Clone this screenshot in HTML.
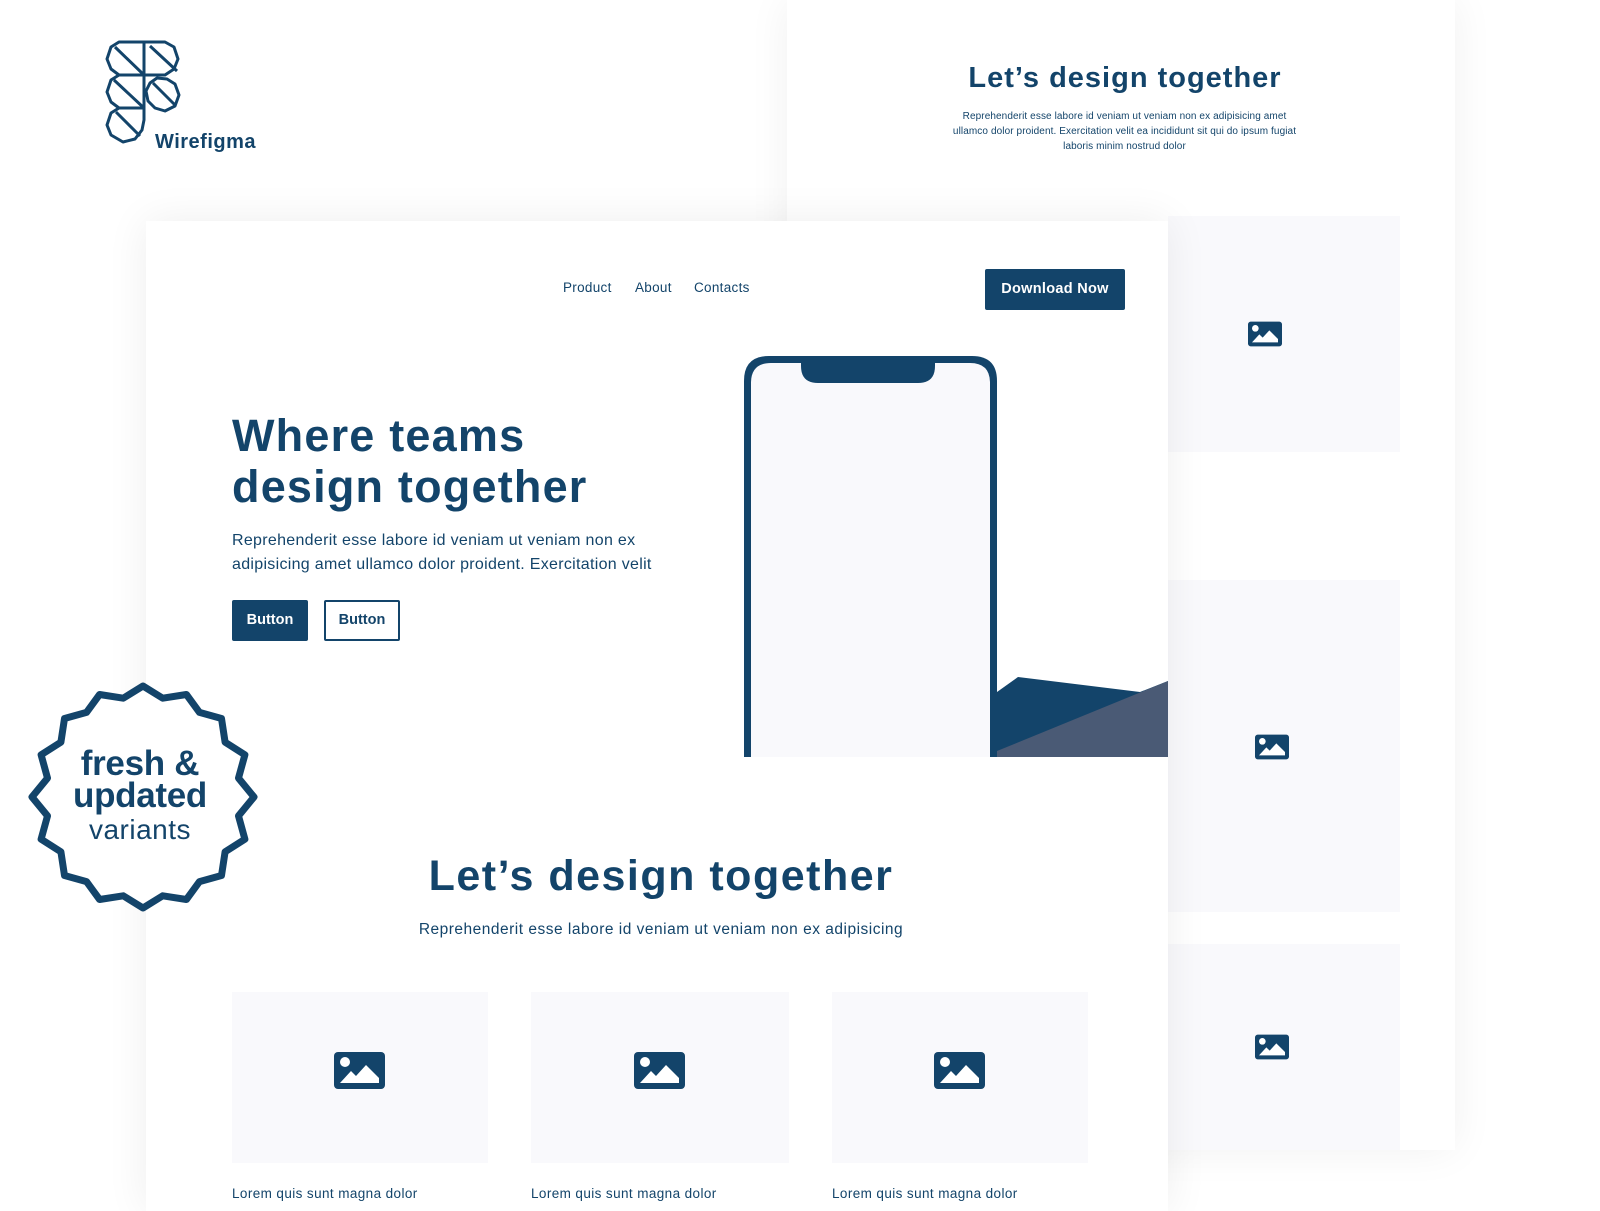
<!DOCTYPE html>
<html><head><meta charset="utf-8"><style>
*{margin:0;padding:0;box-sizing:border-box}
body{width:1600px;height:1200px;overflow:hidden;background:#fff;position:relative;font-family:"Liberation Sans",sans-serif;color:#13446a}
.abs{position:absolute}
.back{left:787px;top:0;width:668px;height:1150px;background:#fff;box-shadow:0 0 40px rgba(0,0,0,.06)}
.main{left:146px;top:221px;width:1022px;height:990px;background:#fff;box-shadow:0 0 40px rgba(0,0,0,.07)}
.ph{background:#f9f9fc}
.b{font-weight:bold}
.c{text-align:center}
</style></head><body>
<div class="abs back">
  <div class="abs c b" style="left:0;width:676px;top:62px;font-size:29px;letter-spacing:1px">Let’s design together</div>
  <div class="abs c" style="left:165px;width:345px;top:109px;font-size:10px;line-height:15px;letter-spacing:.1px">Reprehenderit esse labore id veniam ut veniam non ex adipisicing amet ullamco dolor proident. Exercitation velit ea incididunt sit qui do ipsum fugiat laboris minim nostrud dolor</div>
</div>
<div class="abs ph" style="left:1168px;top:216px;width:232px;height:236px"></div>
<div class="abs ph" style="left:1168px;top:580px;width:232px;height:332px"></div>
<div class="abs ph" style="left:1168px;top:944px;width:232px;height:206px"></div>
<svg class="abs" style="left:1248px;top:321px" width="34" height="26" viewBox="0 0 51 37"><rect width="51" height="37" rx="4" fill="#13446a"/><circle cx="11" cy="10" r="5" fill="#fff"/><path d="M6 31 L17 19 L22 24 L32 13 L45 26 L45 31 Z" fill="#fff"/></svg>
<svg class="abs" style="left:1255px;top:734px" width="34" height="26" viewBox="0 0 51 37"><rect width="51" height="37" rx="4" fill="#13446a"/><circle cx="11" cy="10" r="5" fill="#fff"/><path d="M6 31 L17 19 L22 24 L32 13 L45 26 L45 31 Z" fill="#fff"/></svg>
<svg class="abs" style="left:1255px;top:1034px" width="34" height="26" viewBox="0 0 51 37"><rect width="51" height="37" rx="4" fill="#13446a"/><circle cx="11" cy="10" r="5" fill="#fff"/><path d="M6 31 L17 19 L22 24 L32 13 L45 26 L45 31 Z" fill="#fff"/></svg>

<div class="abs main">
  <div class="abs" style="left:417px;top:59px;font-size:13.5px;letter-spacing:.3px">Product</div>
  <div class="abs" style="left:489px;top:59px;font-size:13.5px;letter-spacing:.3px">About</div>
  <div class="abs" style="left:548px;top:59px;font-size:13.5px;letter-spacing:.3px">Contacts</div>
  <div class="abs b c" style="left:839px;top:48px;width:140px;height:41px;line-height:41px;background:#13446a;color:#fff;border-radius:2px;font-size:14.5px;letter-spacing:.3px">Download Now</div>
  <div class="abs b" style="left:86px;top:189px;font-size:45px;line-height:51px;letter-spacing:1.2px">Where teams<br>design together</div>
  <div class="abs" style="left:86px;top:308px;font-size:16px;line-height:23.5px;width:460px;letter-spacing:.3px">Reprehenderit esse labore id veniam ut veniam non ex adipisicing amet ullamco dolor proident. Exercitation velit</div>
  <div class="abs b c" style="left:86px;top:379px;width:76px;height:41px;line-height:41px;background:#13446a;color:#fff;font-size:14.5px;border-radius:2px">Button</div>
  <div class="abs b c" style="left:178px;top:379px;width:76px;height:41px;line-height:37px;border:2px solid #13446a;font-size:14.5px;border-radius:2px">Button</div>
  <svg class="abs" style="left:0;top:0" width="1022" height="540">
    <path d="M851 471 L872 456 L994 471 L1022 460 L1022 536 L851 536 Z" fill="#13446a"/>
    <path d="M851 530 L1022 460 L1022 536 L851 536 Z" fill="#4a5a75"/>
    <path d="M598 536 L598 160 Q598 135 623 135 L826 135 Q851 135 851 160 L851 536 Z" fill="#13446a"/>
    <path d="M605 536 L605 162 Q605 142 625 142 L824 142 Q844 142 844 162 L844 536 Z" fill="#f9f9fc"/>
    <path d="M655 141 L789 141 L789 145 Q789 162 772 162 L672 162 Q655 162 655 145 Z" fill="#13446a"/>
  </svg>
  <div class="abs b c" style="left:0;width:1030px;top:631px;font-size:43px;letter-spacing:1.5px">Let’s design together</div>
  <div class="abs c" style="left:0;width:1030px;top:700px;font-size:15.5px;letter-spacing:.5px">Reprehenderit esse labore id veniam ut veniam non ex adipisicing</div>
  <div class="abs ph" style="left:86px;top:771px;width:256px;height:171px"></div>
  <div class="abs ph" style="left:385px;top:771px;width:258px;height:171px"></div>
  <div class="abs ph" style="left:686px;top:771px;width:256px;height:171px"></div>
  <svg class="abs" style="left:188px;top:831px" width="51" height="37" viewBox="0 0 51 37"><rect width="51" height="37" rx="4" fill="#13446a"/><circle cx="11" cy="10" r="5" fill="#fff"/><path d="M6 31 L17 19 L22 24 L32 13 L45 26 L45 31 Z" fill="#fff"/></svg>
  <svg class="abs" style="left:488px;top:831px" width="51" height="37" viewBox="0 0 51 37"><rect width="51" height="37" rx="4" fill="#13446a"/><circle cx="11" cy="10" r="5" fill="#fff"/><path d="M6 31 L17 19 L22 24 L32 13 L45 26 L45 31 Z" fill="#fff"/></svg>
  <div class="abs" style="display:none"></div>
  <svg class="abs" style="left:788px;top:831px" width="51" height="37" viewBox="0 0 51 37"><rect width="51" height="37" rx="4" fill="#13446a"/><circle cx="11" cy="10" r="5" fill="#fff"/><path d="M6 31 L17 19 L22 24 L32 13 L45 26 L45 31 Z" fill="#fff"/></svg>
  <div class="abs" style="left:86px;top:965px;font-size:13.5px;letter-spacing:.4px">Lorem quis sunt magna dolor</div>
  <div class="abs" style="left:385px;top:965px;font-size:13.5px;letter-spacing:.4px">Lorem quis sunt magna dolor</div>
  <div class="abs" style="left:686px;top:965px;font-size:13.5px;letter-spacing:.4px">Lorem quis sunt magna dolor</div>
</div>

<svg class="abs" style="left:105px;top:38px" width="80" height="116" viewBox="0 0 80 116" fill="none" stroke="#13446a" stroke-width="3" stroke-linejoin="round">
  <path d="M39 4 L14 4 L6 9 L2 21 L6 31 L14 37 L39 37 Z M39 37 L10 9"/>
  <path d="M39 4 L60 4 L69 9 L73 21 L69 31 L60 37 L39 37 M45 8 L72 33"/>
  <path d="M39 37 L14 37 L6 42 L2 54 L6 64 L14 70 L39 70 Z M39 70 L9 42"/>
  <path d="M62 41 L70 46 L74 57 L70 68 L60 73 L50 70 L43 63 L41 53 L45 45 L52 40 Z M48 45 L70 67"/>
  <path d="M39 70 L14 70 L6 75 L2 87 L6 97 L18 104 L30 101 L37 92 L39 82 Z M39 37 L39 82 M11 74 L35 98"/>
</svg>
<div class="abs b" style="left:155px;top:131px;font-size:20px;letter-spacing:.5px">Wirefigma</div>

<svg class="abs" style="left:28px;top:682px" width="230" height="230" viewBox="-115 -115 230 230">
  <path fill="#fff" stroke="#13446a" stroke-width="7" stroke-linejoin="round" d="M0,-111 L19.7,-98.8 L43.4,-102.5 L56.5,-84.6 L78.5,-78.5 L82.1,-54.8 L101.9,-42.2 L95.5,-18.9 L111,0 L95.5,18.9 L101.9,42.2 L82.1,54.8 L78.5,78.5 L56.5,84.6 L43.4,102.5 L19.7,98.8 L0,111 L-19.7,98.8 L-43.4,102.5 L-56.5,84.6 L-78.5,78.5 L-82.1,54.8 L-101.9,42.2 L-95.5,18.9 L-111,0 L-95.5,-18.9 L-101.9,-42.2 L-82.1,-54.8 L-78.5,-78.5 L-56.5,-84.6 L-43.4,-102.5 L-19.7,-98.8 Z"/>
</svg>
<div class="abs b c" style="left:25px;width:230px;top:748px;font-size:35px;line-height:32px;letter-spacing:-.3px">fresh &amp;<br>updated</div>
<div class="abs c" style="left:25px;width:230px;top:814px;font-size:28px;letter-spacing:.5px">variants</div>
</body></html>
